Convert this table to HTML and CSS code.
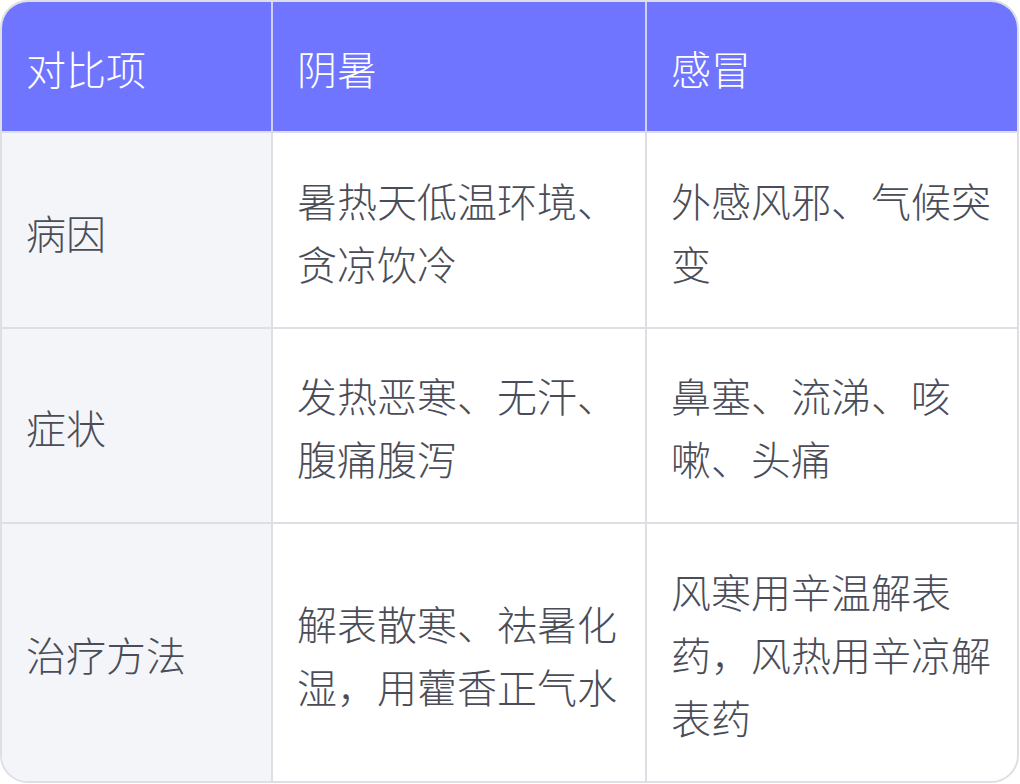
FILE: index.html
```html
<!DOCTYPE html>
<html lang="zh-CN">
<head>
<meta charset="utf-8">
<link rel="stylesheet" href="styles.css">
</head>
<body>
<div class="card">
  <table class="cmp">
    <colgroup>
      <col class="c1"><col class="c2"><col class="c3">
    </colgroup>
    <thead>
      <tr><th>对比项</th><th>阴暑</th><th>感冒</th></tr>
    </thead>
    <tbody>
      <tr class="r1"><td>病因</td><td>暑热天低温环境、贪凉饮冷</td><td>外感风邪、气候突变</td></tr>
      <tr class="r2"><td>症状</td><td>发热恶寒、无汗、腹痛腹泻</td><td>鼻塞、流涕、咳嗽、头痛</td></tr>
      <tr class="r3"><td>治疗方法</td><td>解表散寒、祛暑化湿，用藿香正气水</td><td>风寒用辛温解表药，风热用辛凉解表药</td></tr>
    </tbody>
  </table>
</div>
</body>
</html>
```
FILE: styles.css
```css
html, body {
  margin: 0;
  padding: 0;
  background: #ffffff;
}
body {
  width: 1020px;
  height: 784px;
  overflow: hidden;
  font-family: "Noto Sans CJK SC", "Noto Sans", sans-serif;
}
.card {
  width: 1019px;
  height: 783px;
  box-sizing: border-box;
  border: 2px solid #dedfe4;
  border-radius: 28px;
  overflow: hidden;
  background: #ffffff;
}
.cmp {
  width: 100%;
  border-collapse: separate;
  border-spacing: 0;
  table-layout: fixed;
}
.c1 { width: 271px; }
.c2 { width: 374px; }
.c3 { width: auto; }
.cmp th, .cmp td {
  text-align: left;
  vertical-align: middle;
  font-size: 40px;
  line-height: 63px;
  padding: 36px 24px 32px 24px;
  border-right: 2px solid #dedfe4;
  border-bottom: 2px solid #dedfe4;
  word-break: normal;
  line-break: strict;
}
.cmp th:last-child, .cmp td:last-child {
  border-right: none;
}
.cmp th {
  background: #6f75ff;
  color: #ffffff;
  font-weight: 300;
  padding-top: 35px;
  padding-bottom: 31px;
  border-right-color: #cfd1f7;
}
.cmp td {
  color: #4a4d57;
  font-weight: 300;
}
.cmp td:first-child {
  background: #f4f5f9;
}
.cmp tr.r2 td {
  padding-top: 35px;
  padding-bottom: 32px;
}
.cmp tr.r3 td {
  border-bottom: none;
}
```
